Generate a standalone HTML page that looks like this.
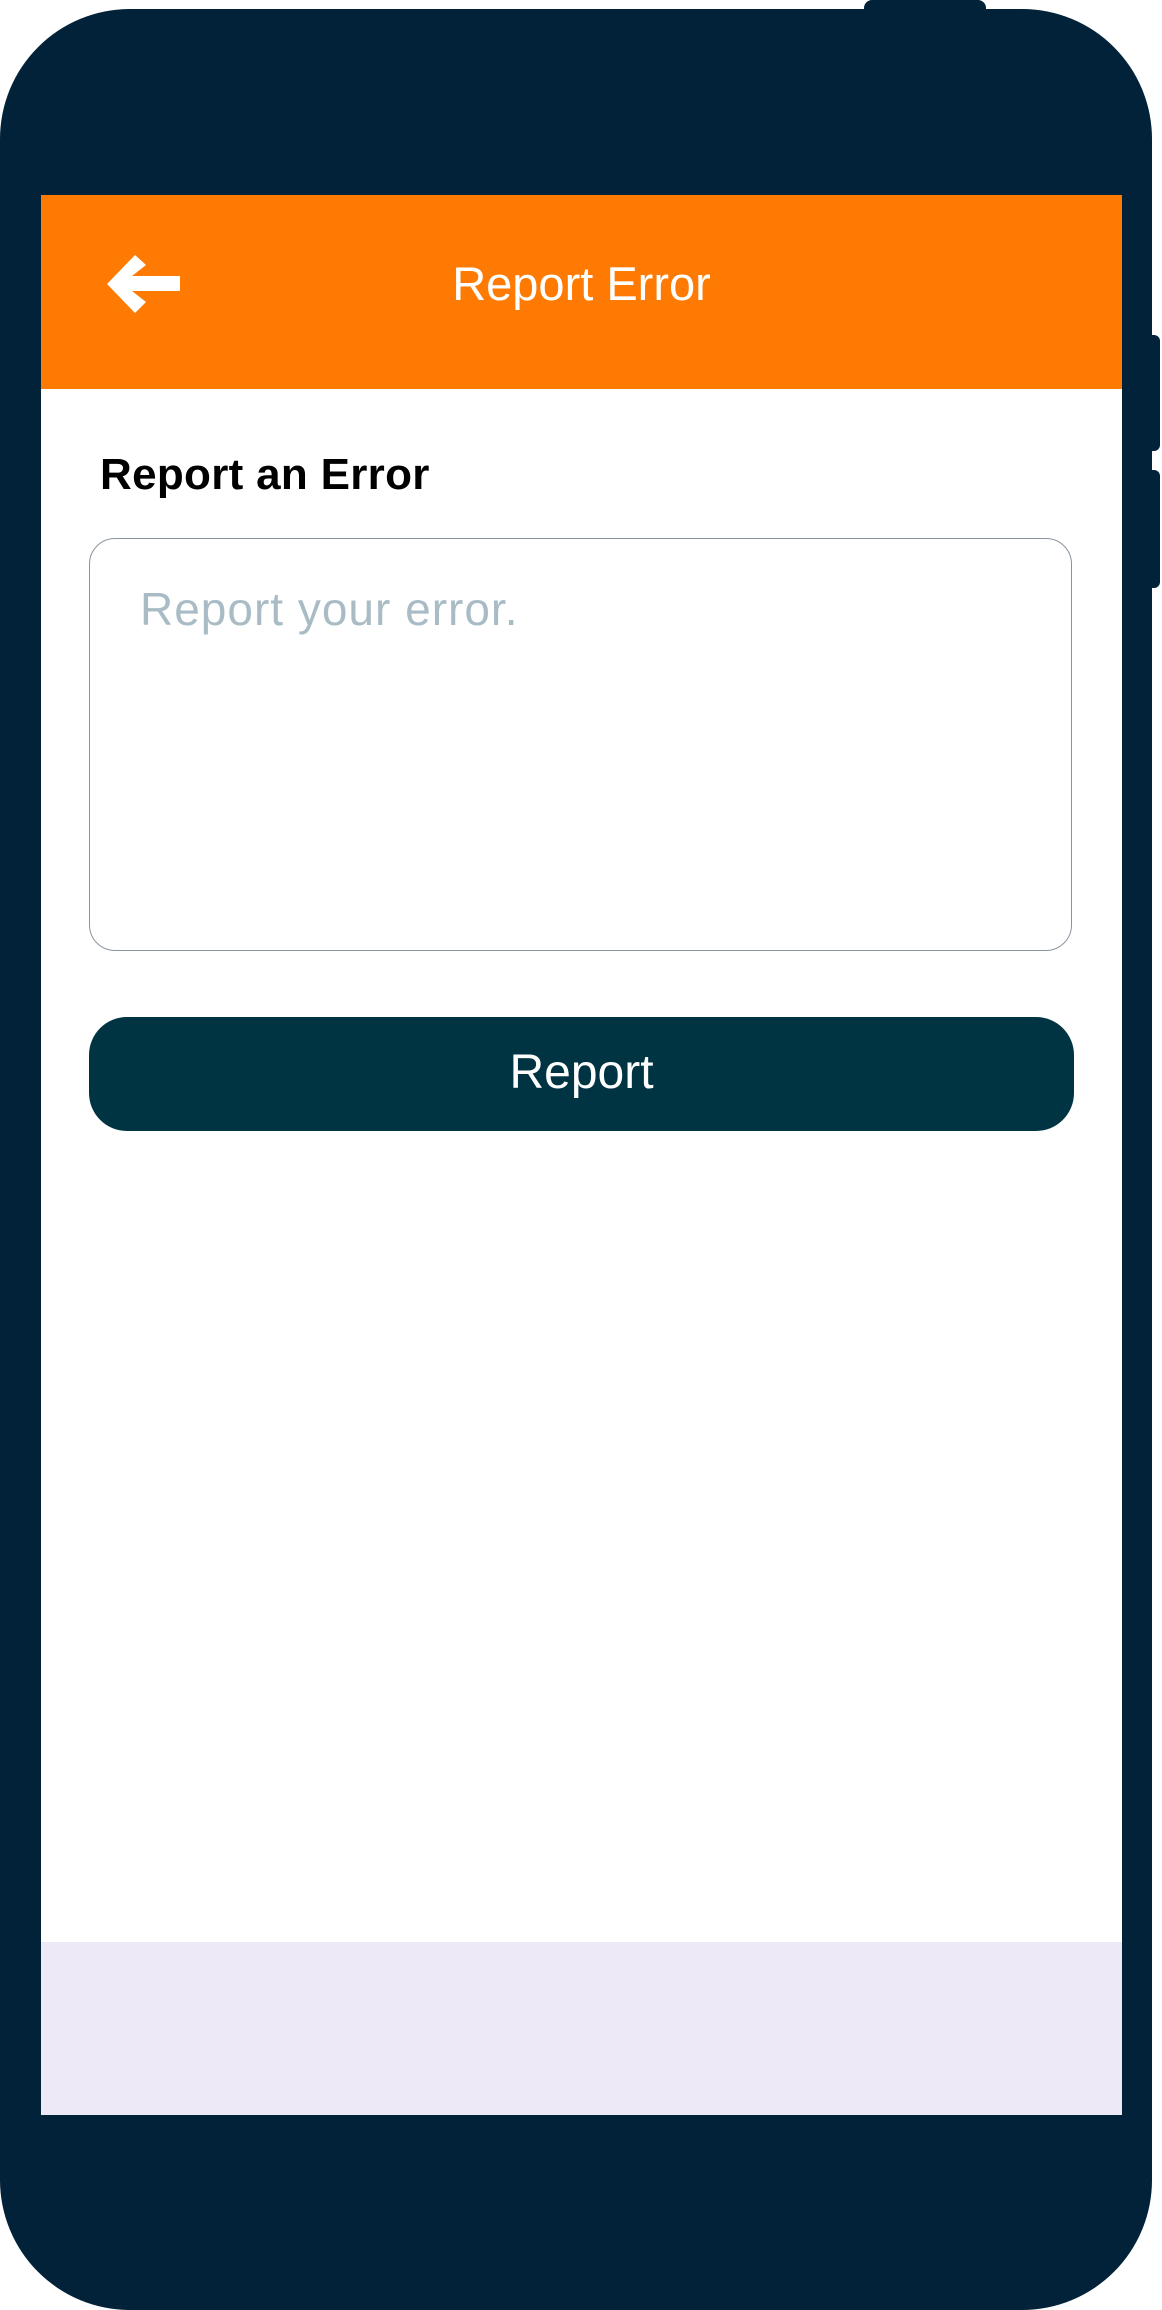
<!DOCTYPE html>
<html><head><meta charset="utf-8"><style>
html,body{margin:0;padding:0;background:#fff;}
body{width:1162px;height:2310px;position:relative;overflow:hidden;font-family:"Liberation Sans",sans-serif;}
.body{position:absolute;left:0;top:9px;width:1152px;height:2301px;background:#012238;border-radius:130px;}
.notch{position:absolute;left:864px;top:0;width:122px;height:20px;background:#012238;border-radius:8px 8px 0 0;}
.btn1{position:absolute;left:1140px;top:335px;width:20px;height:116px;background:#012238;border-radius:6px;}
.btn2{position:absolute;left:1140px;top:470px;width:20px;height:118px;background:#012238;border-radius:6px;}
.screen{position:absolute;left:41px;top:195px;width:1081px;height:1920px;background:#fff;}
.bar{position:absolute;left:0;top:0;width:1081px;height:194px;background:#ff7a02;}
.title{position:absolute;left:41px;width:1081px;top:256px;text-align:center;color:#fff;font-size:47px;}
.h{position:absolute;left:100px;top:450px;font-size:44px;font-weight:bold;color:#000;letter-spacing:0.3px;}
.ta{position:absolute;left:89px;top:538px;width:983px;height:413px;border:1.5px solid #8a94a0;border-radius:26px;box-sizing:border-box;}
.ph{position:absolute;left:140px;top:582px;font-size:46px;color:#a9bcc6;letter-spacing:1px;}
.rb{position:absolute;left:89px;top:1017px;width:985px;height:114px;background:#013443;border-radius:38px;color:#fff;font-size:48px;text-align:center;line-height:112px;}
.lav{position:absolute;left:41px;top:1942px;width:1081px;height:173px;background:#ede9f6;}
</style></head><body>
<div class="notch"></div>
<div class="btn1"></div><div class="btn2"></div>
<div class="body"></div>
<div class="screen"><div class="bar"></div></div>
<svg style="position:absolute;left:0;top:0" width="200" height="340"><polygon fill="#fff" points="107,284 135,255 146,265 132,276 180,276 180,291 132,291 146,302 135,313"/></svg>
<div class="title">Report Error</div>
<div class="h">Report an Error</div>
<div class="ta"></div>
<div class="ph">Report your error.</div>
<div class="rb">Report</div>
<div class="lav"></div>
</body></html>
